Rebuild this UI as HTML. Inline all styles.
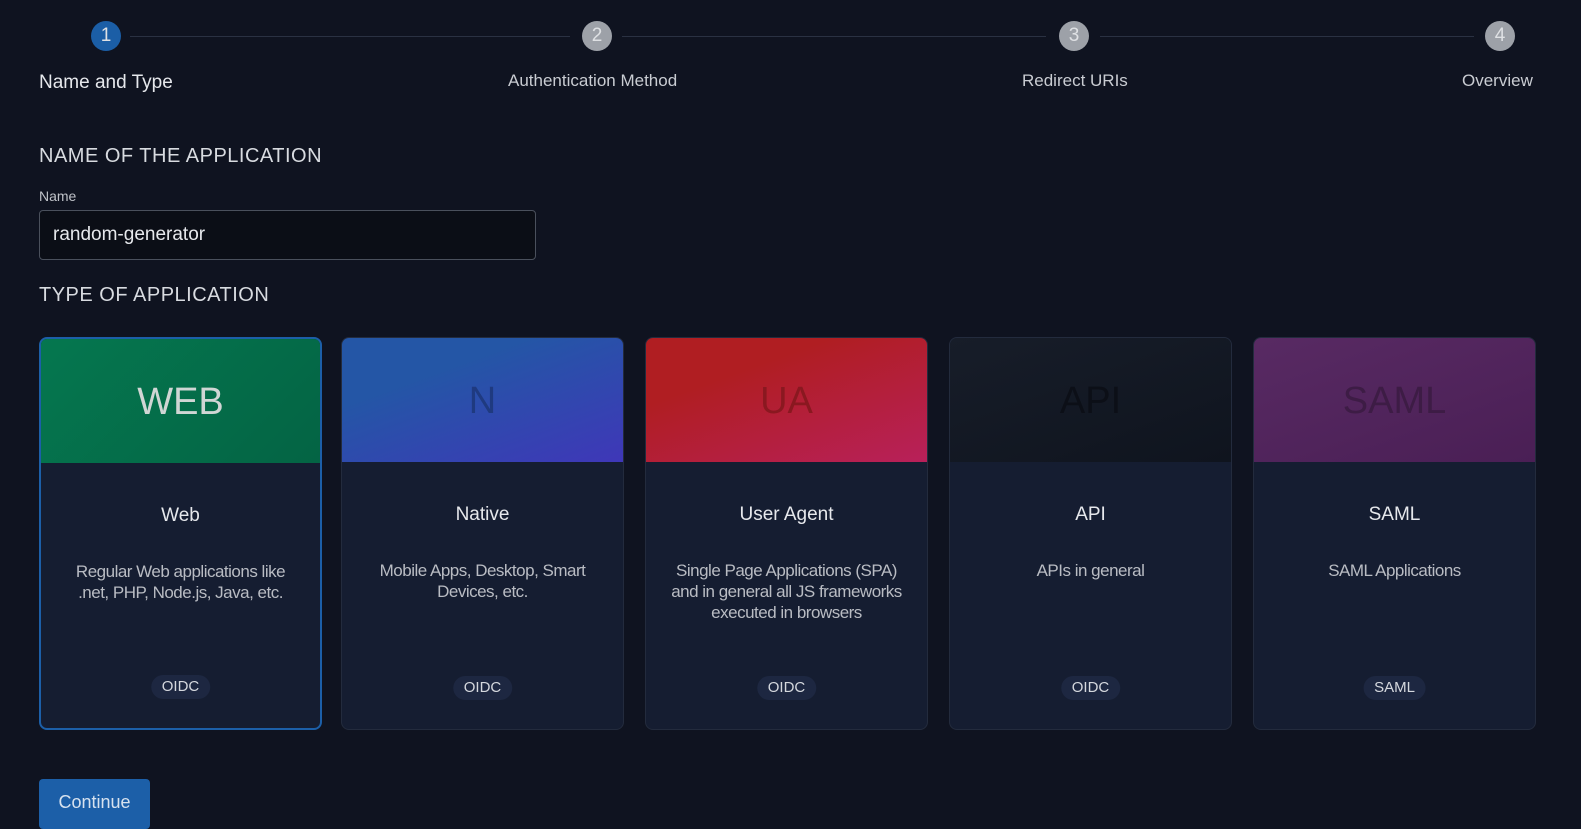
<!DOCTYPE html>
<html><head><meta charset="utf-8"><style>
*{box-sizing:border-box;margin:0;padding:0}
body{width:1581px;height:825px;overflow:hidden;background:#0f1320;font-family:"Liberation Sans",sans-serif;color:#e6e8ec;position:relative}
.ab{position:absolute}
.circ{position:absolute;width:30px;height:30px;border-radius:50%;background:#9da1a8;color:#dfe1e4;font-size:19px;text-align:center;line-height:30px}
.line{position:absolute;top:36px;height:1px;background:#2a3142}
.slab{position:absolute;font-size:17px;color:#c9ccd2;white-space:nowrap}
.h{position:absolute;left:39px;font-size:20px;letter-spacing:.5px;color:#d8dbe0}
.card{position:absolute;top:337px;width:283px;height:393px;border:1px solid #232b3d;border-radius:8px;background:#151d31;overflow:hidden;text-align:center}
.hd{height:124px;font-size:38px;line-height:126px}
.t{margin-top:42px;font-size:19px;color:#e6e8ec}
.d{margin-top:34px;font-size:17px;line-height:21px;color:#b9bcc3;white-space:nowrap;letter-spacing:-.5px}
.b{position:absolute;left:50%;transform:translateX(-50%);top:338px;background:#1d2741;border-radius:12px;padding:0 11px;height:24px;line-height:24px;font-size:15px;color:#d5d8de}
</style></head><body>
<div class="line" style="left:130px;width:440px"></div>
<div class="line" style="left:622px;width:424px"></div>
<div class="line" style="left:1100px;width:374px"></div>
<div class="circ" style="left:91px;top:21px;background:#1b5ea6">1</div>
<div class="circ" style="left:582px;top:21px">2</div>
<div class="circ" style="left:1059px;top:21px">3</div>
<div class="circ" style="left:1485px;top:21px">4</div>
<div class="slab" style="left:39px;top:72px;font-size:19px;color:#e6e8ec">Name and Type</div>
<div class="slab" style="left:508px;top:71px">Authentication Method</div>
<div class="slab" style="left:1022px;top:71px">Redirect URIs</div>
<div class="slab" style="left:1462px;top:71px">Overview</div>
<div class="h" style="top:145px">NAME OF THE APPLICATION</div>
<div class="ab" style="left:39px;top:188px;font-size:14px;color:#bfc2c8">Name</div>
<div class="ab" style="left:39px;top:210px;width:497px;height:50px;border:1px solid #4a505c;border-radius:4px;background:#0b0e16;padding-left:13px;line-height:48px;font-size:19px;color:#e6e8ec">random-generator</div>
<div class="h" style="top:284px">TYPE OF APPLICATION</div>

<div class="card" style="left:39px;border:2px solid #1c5fa8"><div class="hd" style="background:linear-gradient(135deg,#05774f,#046444);color:#d0d6d4">WEB</div><div class="t">Web</div><div class="d">Regular Web applications like<br>.net, PHP, Node.js, Java, etc.</div><div class="b" style="top:336px">OIDC</div></div>
<div class="card" style="left:341px"><div class="hd" style="background:linear-gradient(160deg,#2456a6 30%,#3f37b8);color:#1f3a80">N</div><div class="t">Native</div><div class="d">Mobile Apps, Desktop, Smart<br>Devices, etc.</div><div class="b">OIDC</div></div>
<div class="card" style="left:645px"><div class="hd" style="background:linear-gradient(160deg,#b01e22 30%,#b8205a);color:#8a1820">UA</div><div class="t">User Agent</div><div class="d">Single Page Applications (SPA)<br>and in general all JS frameworks<br>executed in browsers</div><div class="b">OIDC</div></div>
<div class="card" style="left:949px"><div class="hd" style="background:linear-gradient(160deg,#171d29,#0f141e);color:#0c0f17">API</div><div class="t">API</div><div class="d">APIs in general</div><div class="b">OIDC</div></div>
<div class="card" style="left:1253px"><div class="hd" style="background:linear-gradient(160deg,#582a63,#4a1f55);color:#3d1c45">SAML</div><div class="t">SAML</div><div class="d">SAML Applications</div><div class="b">SAML</div></div>

<div class="ab" style="left:39px;top:779px;width:111px;height:50px;background:#1c5fa8;border-radius:4px;text-align:center;line-height:46px;font-size:18px;color:#d7e2ef">Continue</div>
</body></html>
